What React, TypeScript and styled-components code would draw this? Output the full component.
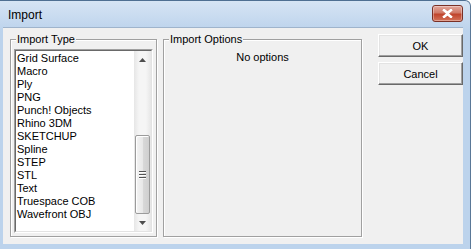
import React from "react";
import styled, { createGlobalStyle } from "styled-components";

const GlobalStyle = createGlobalStyle`
  html, body {
    margin: 0;
    padding: 0;
    background: #ffffff;
  }
  body {
    font-family: "Liberation Sans", Arial, sans-serif;
    font-size: 11px;
    color: #000;
  }
`;

const Window = styled.div`
  width: 471px;
  height: 249px;
  box-sizing: border-box;
  display: flex;
  flex-direction: column;
  background: linear-gradient(#d6e4f4, #bcd3ec 30px, #bcd3ec);
  border-top: 1px solid #4f6f92;
  border-right: 1px solid #5a7897;
  border-radius: 0 6px 0 0;
  padding: 0 7px 5px 3px;
`;

const TitleBar = styled.div`
  height: 26px;
  display: flex;
  align-items: flex-start;
  justify-content: space-between;
`;

const Title = styled.span`
  font-size: 12px;
  margin: 7px 0 0 5px;
  color: #000;
`;

const CloseButton = styled.div`
  width: 31px;
  height: 17px;
  margin-top: 4px;
  box-sizing: border-box;
  border: 1px solid #7a3026;
  border-radius: 3px;
  background: linear-gradient(#e3a79c, #d07a68 45%, #c0442c 55%, #d4735a);
  box-shadow: inset 0 0 0 1px rgba(255, 255, 255, 0.35);
  display: flex;
  align-items: center;
  justify-content: center;
`;

const Body = styled.div`
  flex: 1;
  background: #f0f0f0;
  display: flex;
  align-items: flex-start;
  padding: 5px 0 0 7px;
  border-top: 1px solid #9fb4cc;
`;

const Group = styled.fieldset<{ $w: number }>`
  width: ${(p) => p.$w}px;
  height: 204px;
  box-sizing: border-box;
  margin: 0 6px 0 0;
  padding: 0 3px 3px 3px;
  border: 1px solid #a0a0a0;
  box-shadow: inset 1px 1px 0 #fff, 1px 1px 0 #fff;
  min-width: 0;
`;

const Legend = styled.legend`
  font-size: 11px;
  line-height: 13px;
  padding: 0 1px;
  margin-left: 2px;
  background: #f0f0f0;
`;

const ListBox = styled.div`
  margin-top: 3px;
  height: 184px;
  box-sizing: border-box;
  border-style: solid;
  border-width: 1px;
  border-color: #a0a0a0 #ffffff #ffffff #a0a0a0;
`;

const ListInner = styled.div`
  height: 100%;
  box-sizing: border-box;
  border-style: solid;
  border-width: 1px;
  border-color: #696969 #e3e3e3 #e3e3e3 #696969;
  background: #fff;
  display: flex;
`;

const Items = styled.ul`
  flex: 1;
  list-style: none;
  margin: 0;
  padding: 1px 0 0 1px;
  overflow: hidden;
`;

const Item = styled.li`
  height: 13px;
  line-height: 13px;
  white-space: nowrap;
`;

const ScrollBar = styled.div`
  width: 17px;
  display: flex;
  flex-direction: column;
  background: linear-gradient(90deg, #e6e6e6, #f5f5f5 30%, #f5f5f5 70%, #e6e6e6);
`;

const ArrowButton = styled.div`
  height: 17px;
  display: flex;
  align-items: center;
  justify-content: center;
`;

const Track = styled.div`
  flex: 1;
  display: flex;
  flex-direction: column;
  justify-content: flex-end;
`;

const Thumb = styled.div<{ $h: number }>`
  height: ${(p) => p.$h}px;
  margin: 0 1px;
  box-sizing: border-box;
  border: 1px solid #9b9b9b;
  border-radius: 2px;
  background: linear-gradient(90deg, #f4f4f4, #e8e8e8 50%, #d9d9d9 51%, #cfcfcf);
  box-shadow: inset 1px 1px 0 #fff;
  display: flex;
  align-items: center;
  justify-content: center;
`;

const Grip = styled.div`
  width: 7px;
  display: flex;
  flex-direction: column;
  gap: 1px;
  & > span {
    height: 1px;
    background: #555;
    border-bottom: 1px solid #fff;
  }
`;

const NoOptions = styled.div`
  text-align: center;
  margin-top: 5px;
  line-height: 13px;
`;

const ButtonColumn = styled.div`
  display: flex;
  flex-direction: column;
  gap: 5px;
  margin-left: 10px;
  padding-top: 1px;
`;

const Button = styled.button`
  width: 85px;
  height: 23px;
  box-sizing: border-box;
  font-family: "Liberation Sans", Arial, sans-serif;
  font-size: 11px;
  color: #000;
  background: #f0f0f0;
  border-style: solid;
  border-width: 1px;
  border-color: #ffffff #696969 #696969 #ffffff;
  box-shadow: inset -1px -1px 0 #a0a0a0, inset 1px 1px 0 #e3e3e3;
  padding: 0;
  border-radius: 0;
`;

const Arrow = ({ up }: { up?: boolean }) => (
  <svg width="7" height="4" viewBox="0 0 7 4">
    <path d={up ? "M3.5 0 L7 4 L0 4 Z" : "M0 0 L7 0 L3.5 4 Z"} fill="#4d4d4d" />
  </svg>
);

const types = [
  "Grid Surface",
  "Macro",
  "Ply",
  "PNG",
  "Punch! Objects",
  "Rhino 3DM",
  "SKETCHUP",
  "Spline",
  "STEP",
  "STL",
  "Text",
  "Truespace COB",
  "Wavefront OBJ",
];

export default function App() {
  return (
    <>
      <GlobalStyle />
      <Window>
        <TitleBar>
          <Title>Import</Title>
          <CloseButton>
            <svg width="11" height="9" viewBox="0 0 11 9">
              <path
                d="M1 0.5 L5.5 3.6 L10 0.5 M1 8.5 L5.5 5.4 L10 8.5"
                stroke="#fff"
                strokeWidth="2.2"
                fill="none"
              />
              <path d="M1.5 0.5 L9.5 8.5 M9.5 0.5 L1.5 8.5" stroke="#fff" strokeWidth="2.4" />
            </svg>
          </CloseButton>
        </TitleBar>
        <Body>
          <Group $w={147}>
            <Legend>Import Type</Legend>
            <ListBox>
              <ListInner>
                <Items>
                  {types.map((t) => (
                    <Item key={t}>{t}</Item>
                  ))}
                </Items>
                <ScrollBar>
                  <ArrowButton>
                    <Arrow up />
                  </ArrowButton>
                  <Track>
                    <Thumb $h={79}>
                      <Grip>
                        <span />
                        <span />
                        <span />
                      </Grip>
                    </Thumb>
                  </Track>
                  <ArrowButton>
                    <Arrow />
                  </ArrowButton>
                </ScrollBar>
              </ListInner>
            </ListBox>
          </Group>
          <Group $w={199}>
            <Legend>Import Options</Legend>
            <NoOptions>No options</NoOptions>
          </Group>
          <ButtonColumn>
            <Button>OK</Button>
            <Button>Cancel</Button>
          </ButtonColumn>
        </Body>
      </Window>
    </>
  );
}
